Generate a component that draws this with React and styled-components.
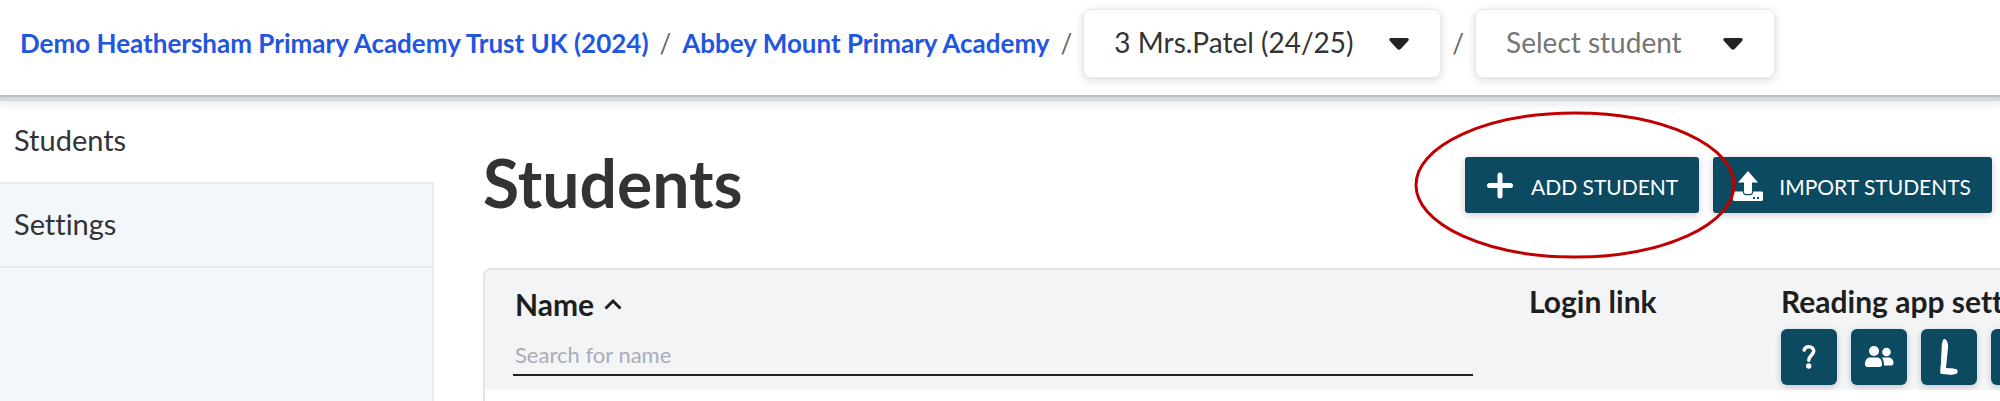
import styled, { createGlobalStyle } from "styled-components";

const GlobalStyle = createGlobalStyle`
body{
    margin: 0;
    background-color: #ffffff;
    font-family: Lato, "Open Sans", sans-serif;
    font-variant-ligatures: none;
    color: #333333;
}
* {
    box-sizing: border-box;
}
`

export default function App() {
    return (
        <Page>
            <GlobalStyle />
            <Header>
                <Crumb href="#trust">Demo Heathersham Primary Academy Trust UK (2024)</Crumb>
                <Slash>/</Slash>
                <Crumb href="#school">Abbey Mount Primary Academy</Crumb>
                <Slash>/</Slash>
                <Picker label="Class" value="3 Mrs.Patel (24/25)" />
                <Slash>/</Slash>
                <Picker label="Student" value="Select student" $muted />
            </Header>
            <Body>
                <Sidebar>
                    <SideLink href="#students" $active>Students</SideLink>
                    <SideLink href="#settings">Settings</SideLink>
                </Sidebar>
                <Main>
                    <TitleRow>
                        <Title>Students</Title>
                        <Actions>
                            <Highlighted>
                                <ActionButton type="button"><PlusIcon />ADD STUDENT</ActionButton>
                                <Ring viewBox="0 0 322 148" aria-hidden="true">
                                    <ellipse cx="161" cy="74" rx="159" ry="72" />
                                </Ring>
                            </Highlighted>
                            <ActionButton type="button"><UploadIcon />IMPORT STUDENTS</ActionButton>
                        </Actions>
                    </TitleRow>
                    <TableBox>
                        <Table>
                            <thead>
                                <tr>
                                    <NameHead>
                                        <SortButton type="button">Name<SortIcon /></SortButton>
                                        <Search type="text" aria-label="Search for name" placeholder="Search for name" />
                                    </NameHead>
                                    <LoginHead>Login link</LoginHead>
                                    <SettingsHead>
                                        Reading app settings
                                        <IconRow>
                                            <IconButton type="button" aria-label="Help"><QuestionIcon /></IconButton>
                                            <IconButton type="button" aria-label="Groups"><PeopleIcon /></IconButton>
                                            <IconButton type="button" aria-label="Level"><LetterIcon /></IconButton>
                                            <IconButton type="button" aria-label="More" />
                                        </IconRow>
                                    </SettingsHead>
                                </tr>
                            </thead>
                        </Table>
                    </TableBox>
                </Main>
            </Body>
        </Page>
    )
}

function Picker({ label, value, $muted }) {
    return (
        <PickerBox>
            <Select aria-label={label} $muted={$muted}>
                <option>{value}</option>
            </Select>
            <Caret viewBox="0 0 20 12" aria-hidden="true">
                <path d="M2 0h16c1.500 0 2.300 1.600 1.300 2.700l-7.600 8.300c-1 1-2.400 1-3.400 0L.7 2.700C-.3 1.600.5 0 2 0z" />
            </Caret>
        </PickerBox>
    )
}

function PlusIcon() {
    return (
        <svg width="30" height="30" viewBox="0 0 30 30" stroke="#ffffff" strokeWidth="5" strokeLinecap="round" aria-hidden="true">
            <path d="M15 4v21M4.500 14.500h21" />
        </svg>
    )
}

function UploadIcon() {
    return (
        <svg width="30" height="30" viewBox="0 0 30 30" fill="#ffffff" aria-hidden="true">
            <path d="M15 0l10 11.500h-6v9.500c0 1.200-.8 2-2 2h-4c-1.200 0-2-.8-2-2v-9.500H5z" />
            <path fillRule="evenodd" d="M1.500 20.500H10v1c0 1.500 1.200 2.700 2.700 2.700h4.600c1.500 0 2.700-1.200 2.700-2.700v-1h8.500c.8 0 1.500.7 1.500 1.500v6.500c0 .8-.7 1.500-1.500 1.500h-27C.7 30 0 29.300 0 28.500V22c0-.8.7-1.500 1.500-1.500zM20 26v2h2v-2zM24 26v2h2v-2z" />
        </svg>
    )
}

function SortIcon() {
    return (
        <svg width="18" height="12" viewBox="0 0 18 12" fill="none" stroke="#1e1e1e" strokeWidth="3" aria-hidden="true">
            <path d="M1.500 10.500L9 3l7.500 7.500" />
        </svg>
    )
}

function QuestionIcon() {
    return (
        <svg width="14" height="24" viewBox="0 0 14 24" aria-hidden="true">
            <path d="M2.200 5c.5-2 2.200-3.200 4.500-3.200 3 0 5 1.700 5 4.300 0 4-4.900 4.500-4.900 9.100" fill="none" stroke="#ffffff" strokeWidth="3.500" strokeLinecap="round" />
            <circle cx="6.700" cy="21" r="2.700" fill="#ffffff" />
        </svg>
    )
}

function PeopleIcon() {
    return (
        <svg width="29" height="22" viewBox="0 0 29 22" fill="#ffffff" aria-hidden="true">
            <circle cx="9" cy="5" r="5" />
            <circle cx="21.500" cy="6" r="4.300" />
            <path d="M0 18c0-4 2-6.500 5-6.500h7c3 0 5 2.500 5 6.500 0 2-.8 3-2.500 3h-12C.8 21 0 20 0 18z" />
            <path d="M17 11.500h6.500c3 0 5 2.300 5 5.500 0 1.500-.7 2.500-2.200 2.500H19c0-3.200-.5-6-2-8z" />
        </svg>
    )
}

function LetterIcon() {
    return (
        <svg width="18" height="36" viewBox="0 0 18 36" fill="#ffffff" aria-hidden="true">
            <path d="M4.500 0c2.200.3 3.700 4 3.600 8L6 29c4 .2 8 .2 10.500 1.300 1.500.8 1.500 3.500-.2 4.500C12 36.500 5 35.500.7 34.800-.2 33 .3 29 .8 26L1.700 8c0-3 .8-8 2.800-8z" />
        </svg>
    )
}

const Page = styled.div`
display: flex;
flex-direction: column;
min-height: 100vh;
overflow: hidden;
`
const Header = styled.header`
display: flex;
align-items: center;
gap: 11px;
padding: 9px 20px 19px;
border-bottom: 4px solid #d5dadd;
box-shadow: inset 0 -2px 0 #b9c0c4, 0 2px 10px rgba(0, 0, 0, 0.12);
white-space: nowrap;
z-index: 1;
`
const Crumb = styled.a`
padding-bottom: 2px;
font-size: 26px;
font-weight: bold;
color: #2255e0;
text-decoration: none;
`
const Slash = styled.span`
padding-bottom: 2px;
font-size: 26px;
color: #666666;
`
const PickerBox = styled.div`
display: flex;
align-items: center;
position: relative;
height: 69px;
border: 1px solid #e8e8e8;
border-radius: 8px;
box-shadow: 0 2px 8px rgba(0, 0, 0, 0.16);
`
const Select = styled.select`
appearance: none;
height: 100%;
min-width: 298px;
padding: 0 86px 4px 30px;
border: 0;
background: transparent;
font-family: inherit;
font-size: 28px;
color: ${({ $muted }) => $muted ? "#757575" : "#333333"};
`
const Caret = styled.svg`
position: absolute;
right: 31px;
width: 20px;
height: 12px;
fill: #222222;
pointer-events: none;
`
const Body = styled.div`
display: flex;
flex: 1;
`
const Sidebar = styled.nav`
display: flex;
flex-direction: column;
width: 434px;
flex-shrink: 0;
background-color: #f1f7fa;
border-right: 2px solid #e6eaed;
`
const SideLink = styled.a`
display: flex;
align-items: center;
height: ${({ $active }) => $active ? "83px" : "84px"};
padding: 0 14px 4px;
margin-right: ${({ $active }) => $active ? "-2px" : "0"};
border-bottom: 2px solid #e6eaed;
background-color: ${({ $active }) => $active ? "#ffffff" : "transparent"};
font-size: 29px;
color: #333333;
text-decoration: none;
`
const Main = styled.main`
flex: 1;
min-width: 0;
padding: 56px 0 0 49px;
`
const TitleRow = styled.div`
display: flex;
align-items: center;
justify-content: space-between;
padding-right: 8px;
margin-bottom: 55px;
`
const Title = styled.h1`
margin: 0;
padding-bottom: 4px;
font-size: 66px;
line-height: 52px;
`
const Actions = styled.div`
display: flex;
gap: 14px;
`
const Highlighted = styled.div`
position: relative;
`
const Ring = styled.svg`
position: absolute;
left: -51px;
top: -46px;
width: 322px;
height: 148px;
fill: none;
stroke: #c00000;
stroke-width: 3px;
pointer-events: none;
z-index: 1;
`
const ActionButton = styled.button`
display: flex;
align-items: center;
gap: 16px;
height: 56px;
padding: 2px 21px 0 20px;
border: 0;
border-radius: 3px;
background-color: #0b4a60;
box-shadow: 0 2px 8px rgba(0, 0, 0, 0.2);
font-family: inherit;
font-size: 21px;
color: #ffffff;
white-space: nowrap;
`
const TableBox = styled.div`
overflow: hidden;
border: 2px solid #e4e4e4;
border-right: 0;
border-radius: 8px 0 0 0;
min-height: 140px;
`
const Table = styled.table`
width: 100%;
table-layout: fixed;
border-collapse: collapse;
background-color: #f2f4f6;
th{
    height: 120px;
    padding: 14px 0 0;
    vertical-align: top;
    text-align: left;
    font-size: 30px;
    line-height: 34px;
    color: #1e1e1e;
    white-space: nowrap;
}
`
const NameHead = styled.th`
&&{
    padding: 17px 56px 0 28px;
}
`
const LoginHead = styled.th`
width: 252px;
`
const SettingsHead = styled.th`
width: 219px;
`
const SortButton = styled.button`
display: flex;
align-items: center;
gap: 10px;
padding: 0 2px;
border: 0;
background: transparent;
font: inherit;
color: inherit;
`
const Search = styled.input`
display: block;
width: 100%;
height: 55px;
padding: 14px 2px 0;
border: 0;
border-bottom: 2px solid #222222;
background: transparent;
font-family: inherit;
font-size: 22px;
&::placeholder{
    color: #a9adb8;
}
`
const IconRow = styled.div`
display: flex;
gap: 14px;
margin-top: 11px;
`
const IconButton = styled.button`
display: flex;
align-items: center;
justify-content: center;
flex-shrink: 0;
width: 56px;
height: 56px;
padding: 0;
border: 0;
border-radius: 6px;
background-color: #0b4a60;
box-shadow: 0 2px 6px rgba(0, 0, 0, 0.2);
`
